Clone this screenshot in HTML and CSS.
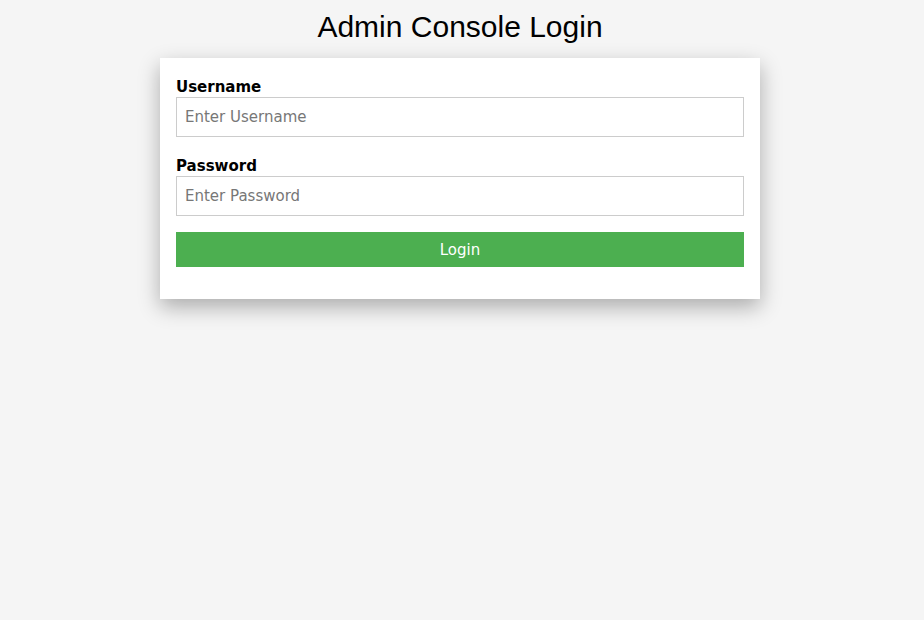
FILE: index.html
```html
<!DOCTYPE html>
<html lang="en">
<head>
<meta charset="utf-8">
<title>Admin Console Login</title>
<link rel="stylesheet" href="styles.css">
</head>
<body>
  <h1 class="title">Admin Console Login</h1>
  <form class="card">
    <label class="label" for="username">Username</label>
    <input class="field" id="username" type="text" placeholder="Enter Username">
    <label class="label label-gap" for="password">Password</label>
    <input class="field" id="password" type="password" placeholder="Enter Password">
    <button class="btn" type="button">Login</button>
  </form>
</body>
</html>
```
FILE: styles.css
```css
html {
  margin: 0;
  padding: 0;
  min-height: 100%;
  background: #f5f5f5;
}
body {
  margin: 0;
  padding: 0 4px 0 0;
  min-height: 620px;
  font-family: "DejaVu Sans", sans-serif;
  font-size: 15px;
  color: #000;
  background: #f5f5f5;
}
.title {
  margin: 10px 0 14px;
  font-family: "Liberation Sans", Arial, sans-serif;
  font-size: 30px;
  font-weight: normal;
  line-height: 34px;
  text-align: center;
}
.card {
  width: 568px;
  margin: 0 auto;
  padding: 20px 16px 32px;
  background: #fff;
  box-shadow: 0 8px 20px rgba(0, 0, 0, 0.3);
  display: flex;
  flex-direction: column;
}
.label {
  font-weight: bold;
  line-height: 19px;
}
.label-gap {
  margin-top: 20px;
}
.field {
  box-sizing: border-box;
  height: 40px;
  width: 100%;
  margin: 0;
  padding: 0 8px;
  border: 1px solid #ccc;
  font-family: "DejaVu Sans", sans-serif;
  font-size: 15px;
  outline: none;
}
.field::placeholder {
  color: #777;
}
.btn {
  margin-top: 16px;
  height: 35px;
  border: none;
  background: #4caf50;
  color: #fff;
  font-family: "DejaVu Sans", sans-serif;
  font-size: 15px;
  cursor: pointer;
}
```
